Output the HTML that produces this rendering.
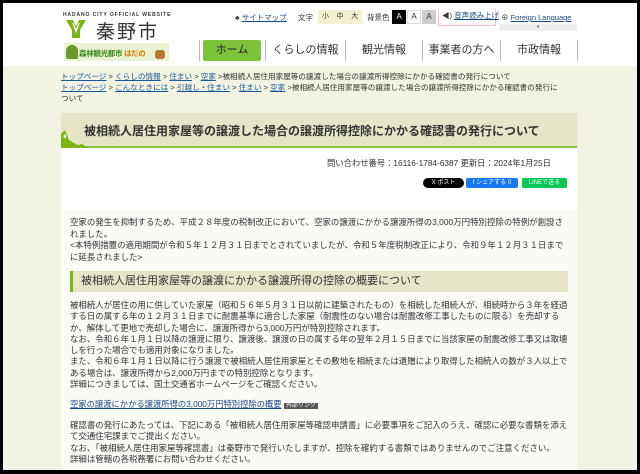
<!DOCTYPE html>
<html><head><meta charset="utf-8"><style>
*{margin:0;padding:0;box-sizing:border-box}
body{width:640px;height:474px;overflow:hidden;background:#000;font-family:"Liberation Sans","Noto Sans CJK JP",sans-serif;color:#333;position:relative}
.a{position:absolute;white-space:nowrap}
#hdr{position:absolute;left:3px;top:3px;width:634px;height:63px;background:#fff}
#bg{position:absolute;left:3px;top:66px;width:634px;height:404px;background:#f3f3e3}
.lk{color:#1a4a8a;text-decoration:underline}
.nav{position:absolute;top:40px;height:21px;font-size:11px;line-height:21px;text-align:center;color:#333;border-left:1px solid #bbb}
.p{font-size:8.45px;line-height:11.3px;color:#333;white-space:nowrap}
.bc{font-size:7.6px;color:#333}
.bc u{color:#1a5a9a}
</style></head><body>
<div id="hdr"></div>
<div id="bg"></div>
<div class="a" style="left:63px;top:12px;font-size:5px;letter-spacing:.9px;color:#333;font-weight:bold">HADANO CITY OFFICIAL WEBSITE</div>
<svg class="a" style="left:66px;top:20px" width="20" height="18" viewBox="0 0 20 18"><path d="M0 0h7l3 6 3-6h7l-6 10v8h-8v-8z" fill="#7cb518"/><path d="M7 3l3 8 3-8" stroke="#fff" stroke-width="1.5" fill="none"/></svg>
<div class="a" style="left:96px;top:17px;font-size:19px;color:#333;letter-spacing:2px">秦野市</div>
<div class="a" style="left:64px;top:43px;width:105px;height:18px;background:#e9f3d1"></div>
<div class="a" style="left:66px;top:45px;width:12px;height:14px;background:#6a9a2a;border-radius:6px 6px 2px 2px"></div>
<div class="a" style="left:79px;top:48px;font-size:7.5px;font-weight:bold;color:#3a8a1a;letter-spacing:-.3px">森林観光都市 <span style="color:#d57a00">はだの</span></div>
<div class="a" style="left:155px;top:50px;width:10px;height:9px;background:#b07a30;border-radius:3px"></div>
<div class="a" style="left:235px;top:12px;font-size:7.5px"><span style="font-size:7px">♣</span> <span class="lk">サイトマップ</span></div>
<div class="a" style="left:298px;top:12px;font-size:7.5px">文字</div>
<div class="a" style="left:318px;top:10px;width:44px;height:14px;background:#f3f1cf;font-size:7px;line-height:14px;display:flex;justify-content:space-around"><span>小</span><span>中</span><span>大</span></div>
<div class="a" style="left:367px;top:12px;font-size:7.5px">背景色</div>
<div class="a" style="left:392px;top:10px;width:14px;height:14px;background:#000;color:#fff;font-size:8px;line-height:14px;text-align:center">A</div>
<div class="a" style="left:407px;top:10px;width:14px;height:14px;background:#fff;border:1px solid #ddd;font-size:8px;line-height:12px;text-align:center">A</div>
<div class="a" style="left:422px;top:10px;width:14px;height:14px;background:#ccc;font-size:8px;line-height:14px;text-align:center">A</div>
<div class="a" style="left:438px;top:9px;width:58px;height:17px;border:1px solid #f4c4c4;border-top:none;font-size:7.5px;line-height:14px;padding-left:3px">◀) <span class="lk">音声読み上げ</span></div>
<div class="a" style="left:501px;top:12px;font-size:7.5px">⊕ <span class="lk">Foreign Language</span></div>
<div class="a" style="left:499px;top:24px;width:78px;height:7px;background:#eee;font-size:5px;text-align:center;line-height:7px">v</div>
<div class="a" style="left:199px;top:40px;width:1px;height:21px;background:#bbb"></div>
<div class="a" style="left:203px;top:40px;width:58px;height:21px;background:#7cc23a;border-radius:2px;font-size:11px;line-height:21px;text-align:center;color:#222">ホーム</div>
<div class="nav" style="left:265px;width:80px">くらしの情報</div>
<div class="nav" style="left:345px;width:77px">観光情報</div>
<div class="nav" style="left:422px;width:78px">事業者の方へ</div>
<div class="nav" style="left:500px;width:77px">市政情報</div>
<div class="a" style="left:577px;top:40px;width:1px;height:21px;background:#bbb"></div>
<div class="a bc" style="left:61px;top:71px"><u>トップページ</u> &gt; <u>くらしの情報</u> &gt; <u>住まい</u> &gt; <u>空家</u> &gt;被相続人居住用家屋等の譲渡した場合の譲渡所得控除にかかる確認書の発行について</div>
<div class="a bc" style="left:61px;top:82px"><u>トップページ</u> &gt; <u>こんなときには</u> &gt; <u>引越し・住まい</u> &gt; <u>住まい</u> &gt; <u>空家</u> &gt;被相続人居住用家屋等の譲渡した場合の譲渡所得控除にかかる確認書の発行に</div>
<div class="a bc" style="left:61px;top:93px">ついて</div>
<div class="a" style="left:61px;top:113px;width:516px;height:361px;background:#fafaf7"></div>
<div class="a" style="left:61px;top:148px;width:516px;height:62px;background:#fff"></div>
<div class="a" style="left:61px;top:113px;width:516px;height:35px;background:#e6e5c7;border-bottom:2px solid #8cc43a"></div>
<svg class="a" style="left:61px;top:126px" width="45" height="22" viewBox="0 0 45 22"><path d="M0 22V8l4-4 4 10 5 3 4 2 4-1 6 4z" fill="#7cb518"/><path d="M2 10l3-2 0 5z" fill="#fff"/></svg>
<div class="a" style="left:84px;top:122px;font-size:12px;font-weight:bold;color:#333">被相続人居住用家屋等の譲渡した場合の譲渡所得控除にかかる確認書の発行について</div>
<div class="a" style="left:327px;top:157px;font-size:8.3px">問い合わせ番号：16116-1784-6387 更新日：2024年1月25日</div>
<div class="a" style="left:423px;top:178px;width:41px;height:10px;background:#000;border-radius:5px;color:#fff;font-size:6px;line-height:10px;text-align:center">X ポスト</div>
<div class="a" style="left:466px;top:178px;width:52px;height:10px;background:#1877f2;border-radius:2px;color:#fff;font-size:6px;line-height:10px;text-align:center">f シェアする 0</div>
<div class="a" style="left:522px;top:178px;width:45px;height:10px;background:#06c755;border-radius:2px;color:#fff;font-size:6px;line-height:10px;text-align:center">LINEで送る</div>
<div class="a p" style="left:70px;top:217px;line-height:11.7px">空家の発生を抑制するため、平成２８年度の税制改正において、空家の譲渡にかかる譲渡所得の3,000万円特別控除の特例が創設さ<br>れました。<br>&lt;本特例措置の適用期間が令和５年１２月３１日までとされていましたが、令和５年度税制改正により、令和９年１２月３１日まで<br>に延長されました&gt;</div>
<div class="a" style="left:70px;top:271px;width:498px;height:21px;background:#e6e5c7;border-left:3px solid #7cb518;font-size:11px;line-height:21px;padding-left:8px;color:#333">被相続人居住用家屋等の譲渡にかかる譲渡所得の控除の概要について</div>
<div class="a p" style="left:70px;top:300px">被相続人が居住の用に供していた家屋（昭和５６年５月３１日以前に建築されたもの）を相続した相続人が、相続時から３年を経過<br>する日の属する年の１２月３１日までに耐震基準に適合した家屋（耐震性のない場合は耐震改修工事したものに限る）を売却する<br>か、解体して更地で売却した場合に、譲渡所得から3,000万円が特別控除されます。<br>なお、令和６年１月１日以降の譲渡に限り、譲渡後、譲渡の日の属する年の翌年２月１５日までに当該家屋の耐震改修工事又は取壊<br>しを行った場合でも適用対象になりました。<br>また、令和６年１月１日以降に行う譲渡で被相続人居住用家屋とその敷地を相続または遺贈により取得した相続人の数が３人以上で<br>ある場合は、譲渡所得から2,000万円までの特別控除となります。<br>詳細につきましては、国土交通省ホームページをご確認ください。</div>
<div class="a" style="left:70px;top:398px;font-size:8.3px"><span class="lk">空家の譲渡にかかる譲渡所得の3,000万円特別控除の概要</span> <span style="background:#555;color:#fff;font-size:6px;padding:0 2px">外部リンク</span></div>
<div class="a p" style="left:70px;top:420px">確認書の発行にあたっては、下記にある「被相続人居住用家屋等確認申請書」に必要事項をご記入のうえ、確認に必要な書類を添え<br>て交通住宅課までご提出ください。<br>なお、「被相続人居住用家屋等確認書」は秦野市で発行いたしますが、控除を確約する書類ではありませんのでご注意ください。<br>詳細は管轄の各税務署にお問い合わせください。</div>
<div class="a" style="left:0;top:470px;width:640px;height:4px;background:#000"></div>
</body></html>
